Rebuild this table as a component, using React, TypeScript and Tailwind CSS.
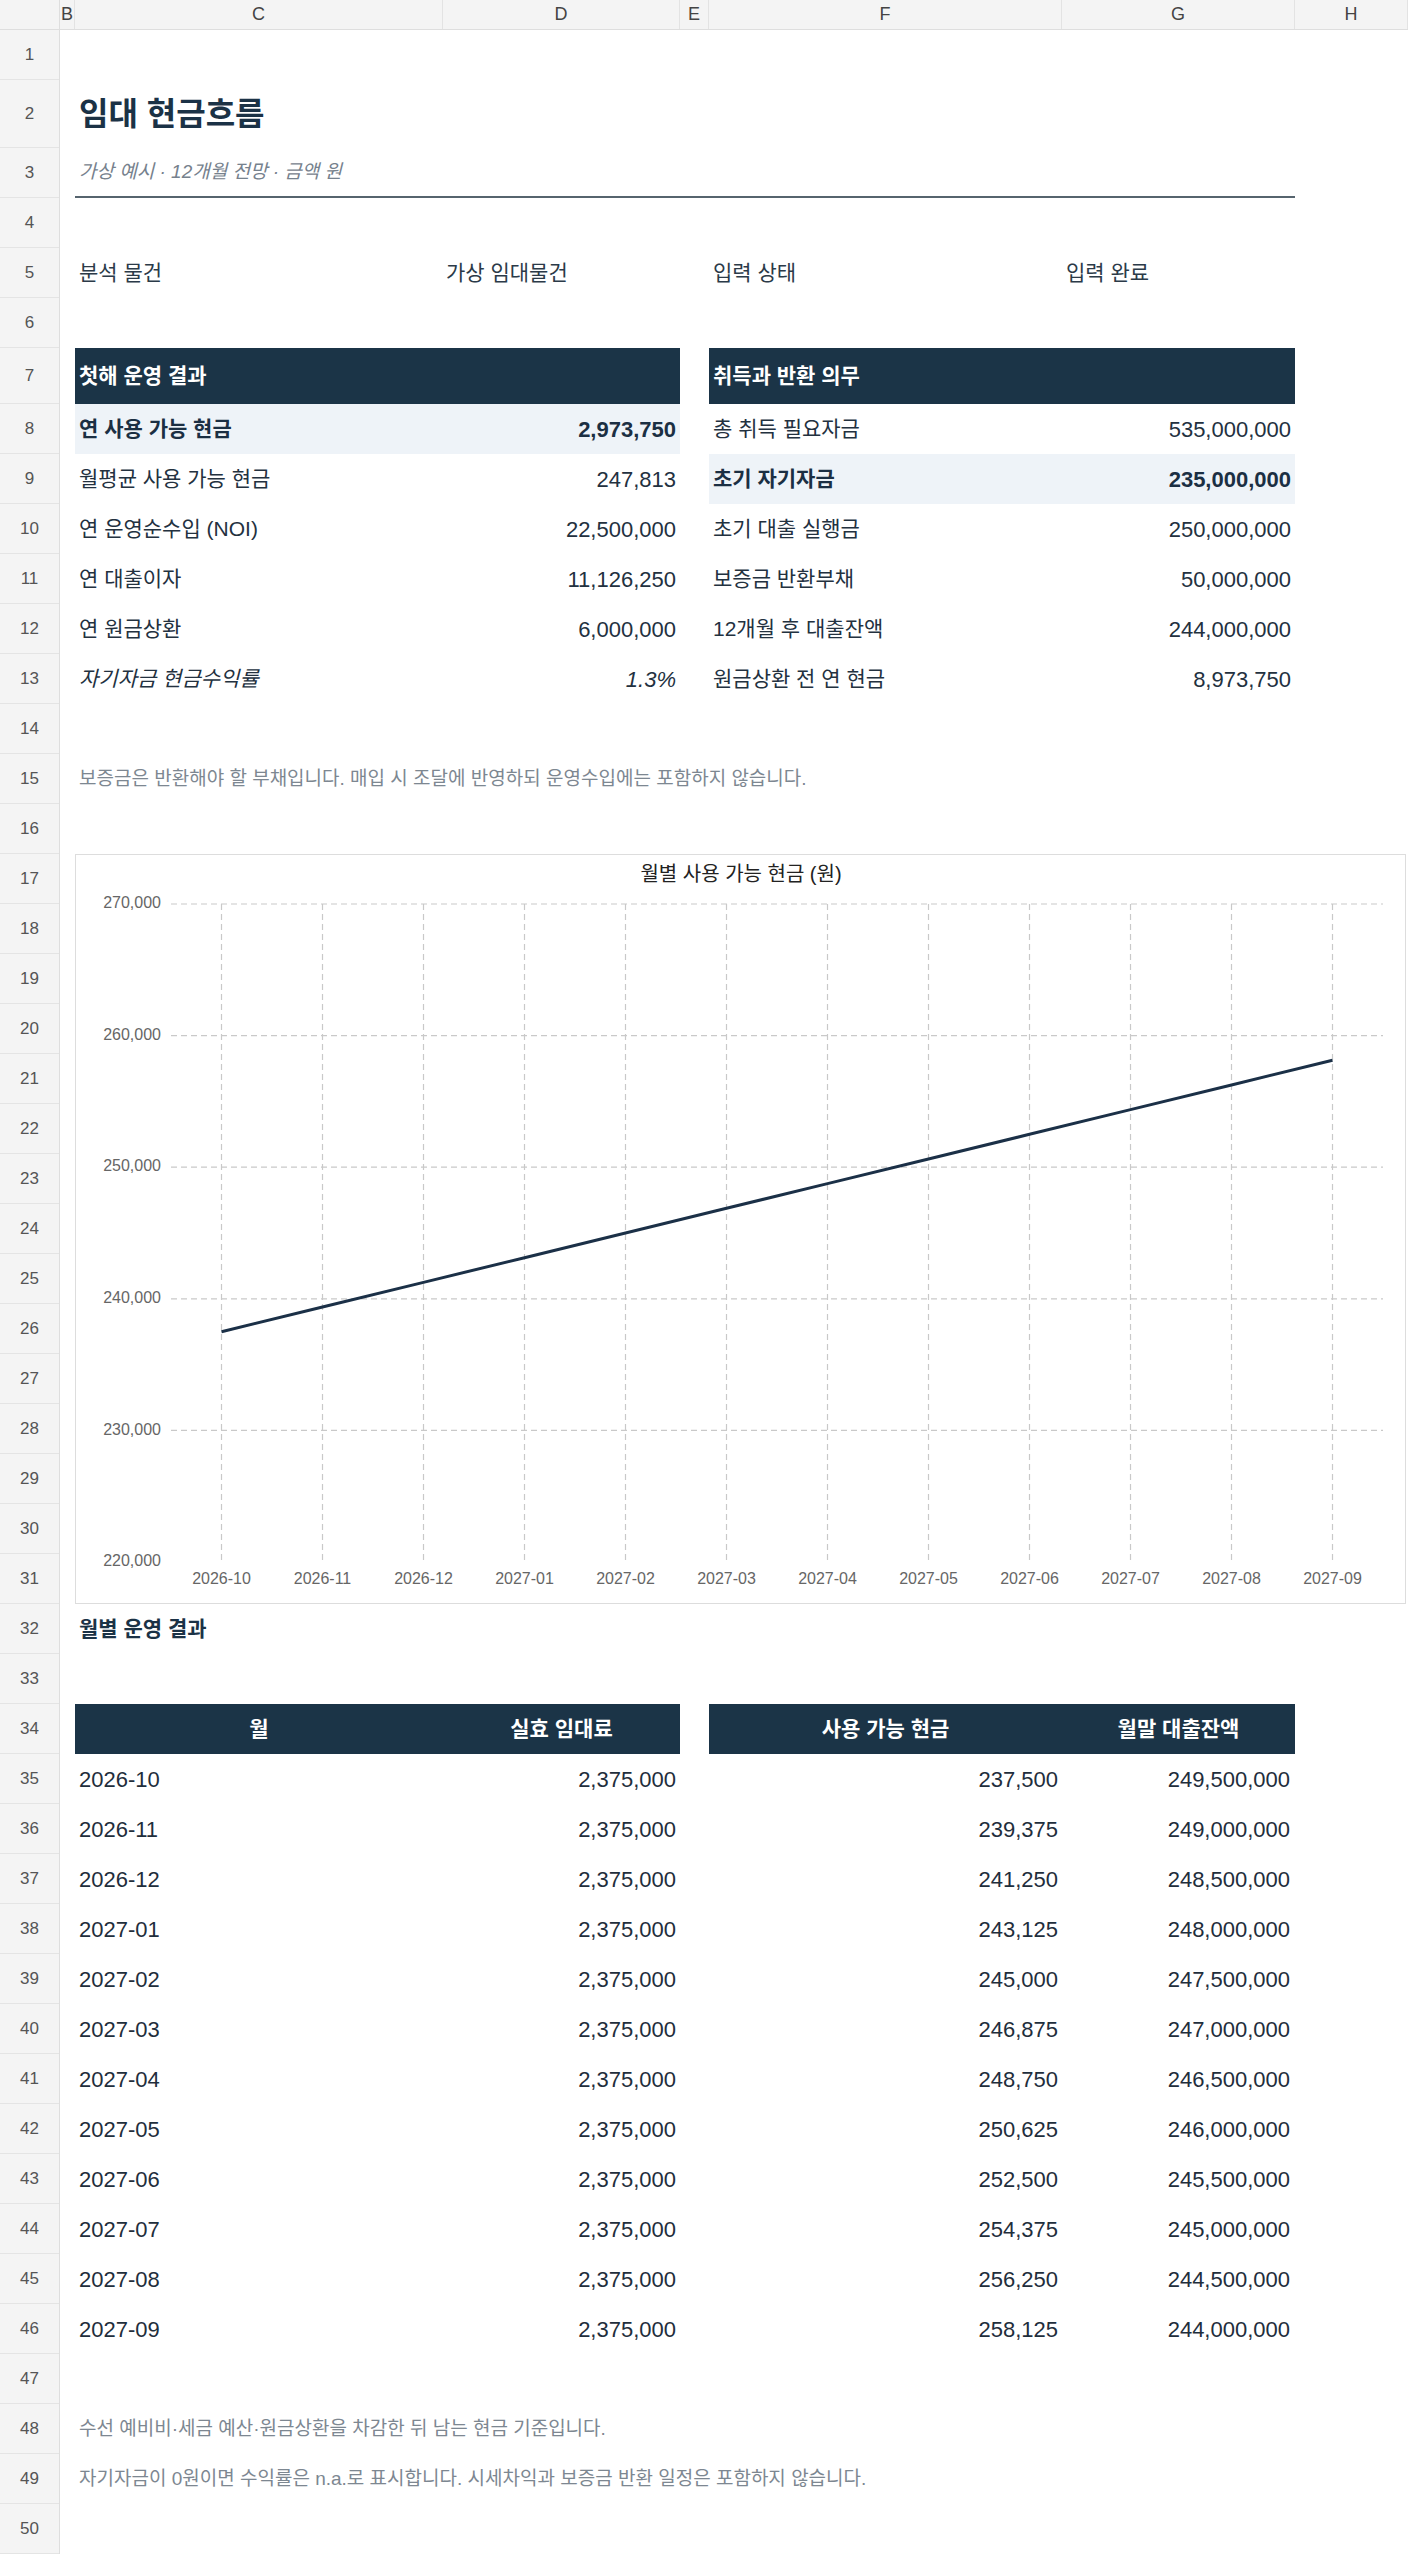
import React from "react";

const months = [
  "2026-10", "2026-11", "2026-12", "2027-01", "2027-02", "2027-03",
  "2027-04", "2027-05", "2027-06", "2027-07", "2027-08", "2027-09",
];
const cash = months.map((_, i) => 237500 + 1875 * i);
const loan = months.map((_, i) => 249500000 - 500000 * i);
const fmt = (n: number) => n.toLocaleString("en-US");

// row heights, row 1..50
const rowHeights = [50, 68, 50, 50, 50, 50, 56, ...Array(43).fill(50)];

const colHeads = [
  { l: "B", w: "w-[15px]" },
  { l: "C", w: "w-[368px]" },
  { l: "D", w: "w-[237px]" },
  { l: "E", w: "w-[29px]" },
  { l: "F", w: "w-[353px]" },
  { l: "G", w: "w-[233px]" },
  { l: "H", w: "w-[113px]" },
];

function Empty({ h = "h-[50px]" }: { h?: string }) {
  return <div className={h} />;
}

function KV({
  label,
  value,
  bold,
  italic,
  hl,
  wide,
}: {
  label: string;
  value: string;
  bold?: boolean;
  italic?: boolean;
  hl?: boolean;
  wide?: boolean;
}) {
  return (
    <div
      className={`flex items-center h-full ${wide ? "w-[605px]" : "w-[586px]"} ${
        hl ? "bg-[#eef3f8]" : ""
      } ${bold ? "font-bold text-[#1b2f43]" : "text-[#23313f]"} ${italic ? "italic" : ""}`}
    >
      <span className="flex-1 pl-[4px] whitespace-nowrap text-[21px]">{label}</span>
      <span className="pr-[4px] whitespace-nowrap">{value}</span>
    </div>
  );
}

function Chart() {
  const left = 95;
  const band = 101;
  const top = 49;
  const step = 131.6;
  const yOf = (v: number) => top + ((270000 - v) / 10000) * step;
  const xs = months.map((_, i) => left + band / 2 + band * i);
  const pts = cash.map((v, i) => `${xs[i]},${yOf(v)}`).join(" ");
  const ticks = [270000, 260000, 250000, 240000, 230000, 220000];
  return (
    <div className="w-[1331px] h-[750px] border border-[#dddddd] bg-white">
      <svg width="1329" height="748" viewBox="0 0 1329 748">
        <text
          x="665"
          y="21"
          textAnchor="middle"
          dominantBaseline="middle"
          fontSize="20"
          fill="#222222"
          fontFamily="Liberation Sans, Noto Sans CJK KR, sans-serif"
        >
          월별 사용 가능 현금 (원)
        </text>
        {ticks.slice(0, 5).map((t) => (
          <line
            key={t}
            x1={left}
            x2={left + band * 12}
            y1={yOf(t)}
            y2={yOf(t)}
            stroke="#c9c9c9"
            strokeWidth="1.2"
            strokeDasharray="6 4"
          />
        ))}
        {xs.map((x) => (
          <line
            key={x}
            x1={x}
            x2={x}
            y1={top}
            y2={yOf(220000)}
            stroke="#c9c9c9"
            strokeWidth="1.2"
            strokeDasharray="6 4"
          />
        ))}
        {ticks.map((t) => (
          <text
            key={t}
            x="85"
            y={yOf(t)}
            textAnchor="end"
            dominantBaseline="middle"
            fontSize="16"
            fill="#666666"
            fontFamily="Liberation Sans, sans-serif"
          >
            {fmt(t)}
          </text>
        ))}
        {months.map((m, i) => (
          <text
            key={m}
            x={xs[i]}
            y="725"
            textAnchor="middle"
            dominantBaseline="middle"
            fontSize="16"
            fill="#666666"
            fontFamily="Liberation Sans, sans-serif"
          >
            {m}
          </text>
        ))}
        <polyline points={pts} fill="none" stroke="#1b3047" strokeWidth="3" strokeLinejoin="round" />
      </svg>
    </div>
  );
}

const summary = [
  [["연 사용 가능 현금", "2,973,750", "b"], ["총 취득 필요자금", "535,000,000", ""]],
  [["월평균 사용 가능 현금", "247,813", ""], ["초기 자기자금", "235,000,000", "b"]],
  [["연 운영순수입 (NOI)", "22,500,000", ""], ["초기 대출 실행금", "250,000,000", ""]],
  [["연 대출이자", "11,126,250", ""], ["보증금 반환부채", "50,000,000", ""]],
  [["연 원금상환", "6,000,000", ""], ["12개월 후 대출잔액", "244,000,000", ""]],
  [["자기자금 현금수익률", "1.3%", "i"], ["원금상환 전 연 현금", "8,973,750", ""]],
];

export default function App() {
  return (
    <div className="w-[1408px] h-[2554px] bg-white overflow-hidden font-['Liberation_Sans','Noto_Sans_CJK_KR',sans-serif] text-[22px] text-[#23313f]">
      {/* column letters */}
      <div className="flex h-[30px] bg-[#f4f4f4] border-b border-[#dedede] text-[18px] text-[#444]">
        <div className="w-[60px] border-r border-[#dedede]" />
        {colHeads.map((c) => (
          <div
            key={c.l}
            className={`${c.w} flex items-center justify-center border-r border-[#e3e3e3] overflow-visible whitespace-nowrap`}
          >
            {c.l}
          </div>
        ))}
      </div>

      <div className="flex">
        {/* row numbers */}
        <div className="w-[60px] flex flex-col bg-[#f4f4f4] border-r border-[#dedede] text-[17px] text-[#555]">
          {rowHeights.map((h, i) => (
            <div
              key={i}
              className={`${h === 68 ? "h-[68px]" : h === 56 ? "h-[56px]" : "h-[50px]"} flex items-center justify-center border-b border-[#e4e4e4]`}
            >
              {i + 1}
            </div>
          ))}
        </div>

        {/* sheet body */}
        <div className="flex flex-col pl-[15px]">
          <Empty />
          <div className="h-[68px] flex items-center pl-[4px] text-[32px] font-bold text-[#1b3246]">
            임대 현금흐름
          </div>
          <div className="h-[50px] w-[1220px] flex items-center pl-[4px] border-b-2 border-[#56646e] italic text-[19px] text-[#76818d]">
            가상 예시 · 12개월 전망 · 금액 원
          </div>
          <Empty />
          <div className="h-[50px] flex items-center text-[21px] text-[#2b3a48]">
            <span className="w-[368px] pl-[4px]">분석 물건</span>
            <span className="w-[237px] pl-[3px]">가상 임대물건</span>
            <span className="w-[29px]" />
            <span className="w-[353px] pl-[4px]">입력 상태</span>
            <span className="w-[233px] pl-[4px]">입력 완료</span>
          </div>
          <Empty />
          <div className="h-[56px] flex text-white font-bold text-[21px]">
            <div className="w-[605px] bg-[#1b3447] flex items-center pl-[4px]">첫해 운영 결과</div>
            <div className="w-[29px]" />
            <div className="w-[586px] bg-[#1b3447] flex items-center pl-[4px]">취득과 반환 의무</div>
          </div>
          {summary.map(([a, b], i) => (
            <div key={i} className="h-[50px] flex">
              <KV wide label={a[0]} value={a[1]} bold={a[2] === "b"} hl={a[2] === "b"} italic={a[2] === "i"} />
              <div className="w-[29px]" />
              <KV label={b[0]} value={b[1]} bold={b[2] === "b"} hl={b[2] === "b"} />
            </div>
          ))}
          <Empty />
          <div className="h-[50px] flex items-center pl-[4px] text-[19px] text-[#7d8791] whitespace-nowrap">
            보증금은 반환해야 할 부채입니다. 매입 시 조달에 반영하되 운영수입에는 포함하지 않습니다.
          </div>
          <Empty />
          <Chart />
          <div className="h-[50px] flex items-center pl-[4px] text-[21px] font-bold text-[#1b3246]">월별 운영 결과</div>
          <Empty />
          <div className="h-[50px] flex text-white font-bold text-[21px]">
            <div className="w-[368px] bg-[#1b3447] flex items-center justify-center">월</div>
            <div className="w-[237px] bg-[#1b3447] flex items-center justify-center">실효 임대료</div>
            <div className="w-[29px]" />
            <div className="w-[353px] bg-[#1b3447] flex items-center justify-center">사용 가능 현금</div>
            <div className="w-[233px] bg-[#1b3447] flex items-center justify-center">월말 대출잔액</div>
          </div>
          {months.map((m, i) => (
            <div key={m} className="h-[50px] flex items-center text-[#1f2e3c]">
              <span className="w-[368px] pl-[4px]">{m}</span>
              <span className="w-[237px] pr-[4px] text-right">2,375,000</span>
              <span className="w-[29px]" />
              <span className="w-[353px] pr-[4px] text-right">{fmt(cash[i])}</span>
              <span className="w-[233px] pr-[5px] text-right">{fmt(loan[i])}</span>
            </div>
          ))}
          <Empty />
          <div className="h-[50px] flex items-center pl-[4px] text-[19px] text-[#7d8791] whitespace-nowrap">
            수선 예비비·세금 예산·원금상환을 차감한 뒤 남는 현금 기준입니다.
          </div>
          <div className="h-[50px] flex items-center pl-[4px] text-[19px] text-[#7d8791] whitespace-nowrap">
            자기자금이 0원이면 수익률은 n.a.로 표시합니다. 시세차익과 보증금 반환 일정은 포함하지 않습니다.
          </div>
          <Empty />
        </div>
      </div>
    </div>
  );
}
